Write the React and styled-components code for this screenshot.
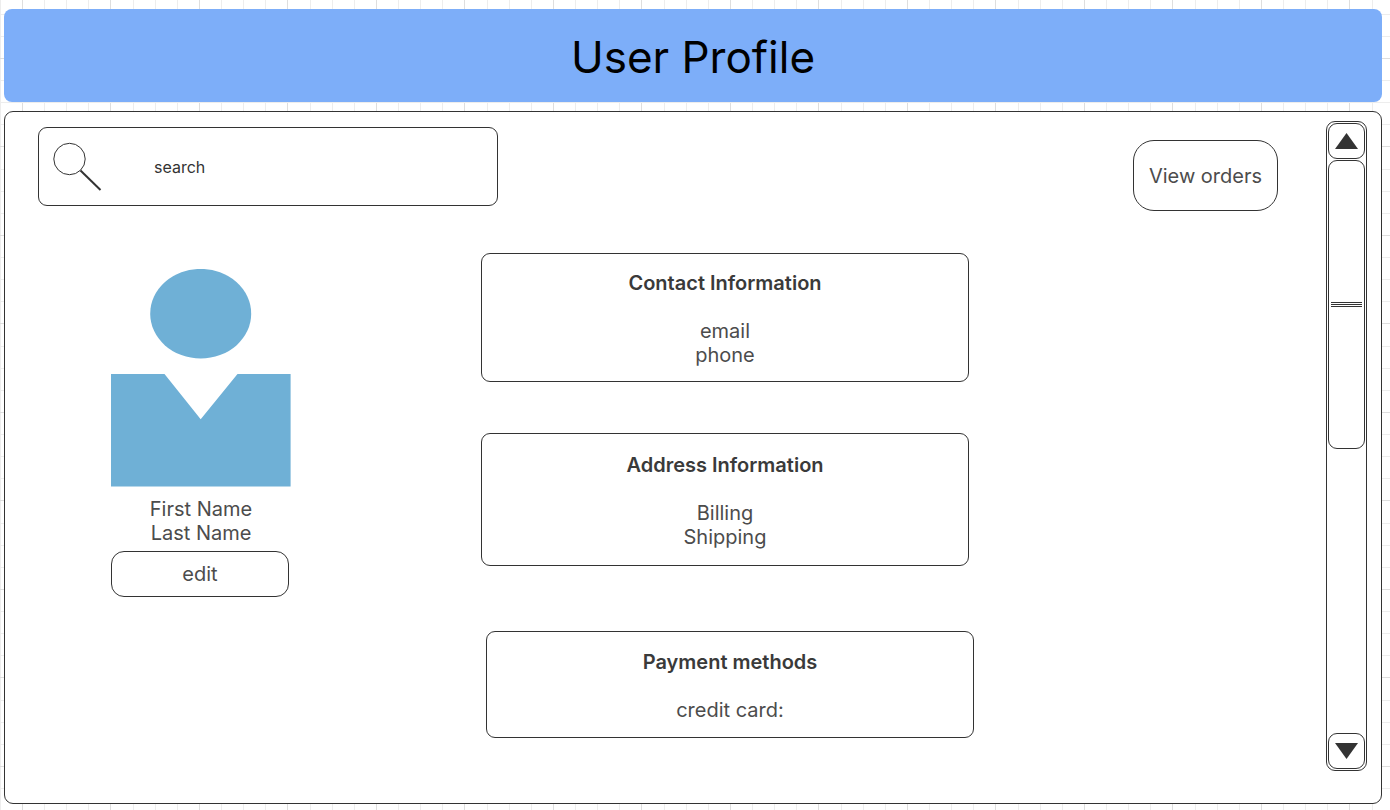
import React from "react";
import styled, { createGlobalStyle } from "styled-components";

const ink = "#333333";

const GlobalStyle = createGlobalStyle`
  *, *::before, *::after { box-sizing: border-box; }
  body { margin: 0; background: #ffffff; }
  button, input { font: inherit; color: inherit; margin: 0; }
`;

const Page = styled.div`
  position: relative;
  isolation: isolate;
  display: flex;
  flex-direction: column;
  gap: 9px;
  min-height: 100vh;
  padding: 9px 8px 6px 4px;
  font-family: Inter, "Liberation Sans", sans-serif;
  font-size: 20px;
  line-height: 24px;
  color: #4c4c4c;
`;

const GridSvg = styled.svg`
  position: absolute;
  inset: 0;
  z-index: -1;
  width: 100%;
  height: 100%;
`;

const Banner = styled.header`
  display: flex;
  align-items: center;
  justify-content: center;
  height: 93px;
  padding-top: 2px;
  border-radius: 8px;
  background: #7daef9;
`;

const Title = styled.h1`
  margin: 0;
  font-size: 44px;
  line-height: 54px;
  font-weight: 400;
  color: #000000;
`;

const Panel = styled.main`
  flex: 1;
  display: flex;
  gap: 48px;
  padding: 9px 14px 32px 33px;
  border: 1px solid ${ink};
  border-radius: 9px;
  background: #ffffff;
`;

const Content = styled.div`
  flex: 1;
  padding-top: 6px;
`;

const Toolbar = styled.div`
  display: flex;
  justify-content: space-between;
  align-items: flex-start;
`;

const SearchBox = styled.label`
  display: flex;
  align-items: center;
  gap: 52px;
  width: 460px;
  height: 79px;
  padding: 0 14px;
  border: 1px solid ${ink};
  border-radius: 9px;
`;

const SearchInput = styled.input`
  flex: 1;
  min-width: 0;
  padding: 0;
  border: 0;
  outline: 0;
  background: transparent;
  font-size: 16px;
  line-height: 24px;
  color: ${ink};
  &::placeholder { color: ${ink}; opacity: 1; }
`;

const OutlineButton = styled.button`
  width: ${(p) => p.$width};
  height: ${(p) => p.$height};
  margin-top: ${(p) => p.$top};
  padding: 0;
  border: 1px solid ${ink};
  border-radius: ${(p) => p.$radius};
  background: #ffffff;
  cursor: pointer;
`;

const Columns = styled.div`
  display: flex;
  align-items: flex-start;
  gap: 190px;
  padding: 42px 0 0 73px;
`;

const Profile = styled.section`
  display: flex;
  flex-direction: column;
  width: 180px;
  padding-top: 16px;
  text-align: center;
`;

const Avatar = styled.svg`
  display: block;
  margin-bottom: 10px;
`;

const Line = styled.p`
  margin: 0;
`;

const Cards = styled.div`
  display: flex;
  flex-direction: column;
`;

const Card = styled.section`
  display: flex;
  flex-direction: column;
  justify-content: center;
  width: 488px;
  min-height: ${(p) => p.$height};
  margin: ${(p) => p.$margin};
  padding-top: 2px;
  border: 1px solid ${ink};
  border-radius: 9px;
  text-align: center;
`;

const CardTitle = styled.h2`
  margin: 0 0 24px;
  font-size: 20px;
  line-height: 24px;
  font-weight: 600;
  color: #3a3a3a;
`;

const Scrollbar = styled.div`
  display: flex;
  flex-direction: column;
  width: 41px;
  padding: 1px;
  border: 1px solid ${ink};
  border-radius: 9px;
`;

const ArrowButton = styled.button`
  display: grid;
  place-items: center;
  flex: none;
  height: 36px;
  padding: 0;
  border: 1px solid ${ink};
  border-radius: 9px;
  background: #ffffff;
  cursor: pointer;
`;

const Track = styled.div`
  flex: 1;
  padding: 1px 0;
`;

const Thumb = styled.div`
  display: flex;
  flex-direction: column;
  justify-content: center;
  gap: 1px;
  height: 289px;
  padding: 0 2px;
  border: 1px solid ${ink};
  border-radius: 9px;
`;

const Grip = styled.span`
  height: 1px;
  background: ${ink};
`;

const offsets = [0, 22, 44, 66, 88, 111, 133, 155];
const isMajor = (n) => n === 0 || n === 88;
const shade = (n) => (isMajor(n) ? "#dedede" : "#ededed");

function CanvasGrid() {
  return (
    <GridSvg aria-hidden="true">
      <defs>
        <pattern id="columns" x="22" width="177" height="177" patternUnits="userSpaceOnUse">
          {offsets.map((n) => (
            <rect key={n} x={n} width="1" height="177" fill={shade(n)} />
          ))}
        </pattern>
        <pattern id="rows" y="58" width="177" height="177" patternUnits="userSpaceOnUse">
          {offsets.map((n) => (
            <rect key={n} y={n} width="177" height="1" fill={shade(n)} />
          ))}
        </pattern>
      </defs>
      <rect width="100%" height="100%" fill="url(#columns)" />
      <rect width="100%" height="100%" fill="url(#rows)" />
    </GridSvg>
  );
}

const cards = [
  { title: "Contact Information", lines: ["email", "phone"], height: "129px", margin: "0" },
  { title: "Address Information", lines: ["Billing", "Shipping"], height: "133px", margin: "51px 0 0" },
  { title: "Payment methods", lines: ["credit card:"], height: "107px", margin: "65px 0 0 5px" },
];

export default function App() {
  return (
    <Page>
      <GlobalStyle />
      <CanvasGrid />
      <Banner>
        <Title>User Profile</Title>
      </Banner>
      <Panel>
        <Content>
          <Toolbar>
            <SearchBox>
              <svg width="49" height="49" viewBox="0 0 49 49" fill="none" stroke={ink} aria-hidden="true">
                <circle cx="16.5" cy="17" r="15.7" />
                <path d="M27.5 28.5 47.5 48" strokeWidth="2" />
              </svg>
              <SearchInput type="search" placeholder="search" aria-label="search" />
            </SearchBox>
            <OutlineButton type="button" $width="145px" $height="71px" $top="13px" $radius="21px">
              View orders
            </OutlineButton>
          </Toolbar>
          <Columns>
            <Profile>
              <Avatar width="180" height="218" viewBox="0 0 180 218" fill="#6fb0d6" aria-hidden="true">
                <ellipse cx="89.7" cy="44.7" rx="50.5" ry="44.8" />
                <path d="M0 105H53.5L89.7 150.3L126.5 105H179.6V217.6H0Z" />
              </Avatar>
              <Line>First Name</Line>
              <Line>Last Name</Line>
              <OutlineButton type="button" $width="178px" $height="46px" $top="6px" $radius="13px">
                edit
              </OutlineButton>
            </Profile>
            <Cards>
              {cards.map((card) => (
                <Card key={card.title} $height={card.height} $margin={card.margin}>
                  <CardTitle>{card.title}</CardTitle>
                  {card.lines.map((line) => (
                    <Line key={line}>{line}</Line>
                  ))}
                </Card>
              ))}
            </Cards>
          </Columns>
        </Content>
        <Scrollbar>
          <ArrowButton type="button" aria-label="Scroll up">
            <svg width="23" height="16" viewBox="0 0 23 16" fill={ink}>
              <path d="M11.5 0 23 16H0Z" />
            </svg>
          </ArrowButton>
          <Track>
            <Thumb>
              <Grip />
              <Grip />
              <Grip />
            </Thumb>
          </Track>
          <ArrowButton type="button" aria-label="Scroll down">
            <svg width="23" height="16" viewBox="0 0 23 16" fill={ink}>
              <path d="M0 0H23L11.5 16Z" />
            </svg>
          </ArrowButton>
        </Scrollbar>
      </Panel>
    </Page>
  );
}
